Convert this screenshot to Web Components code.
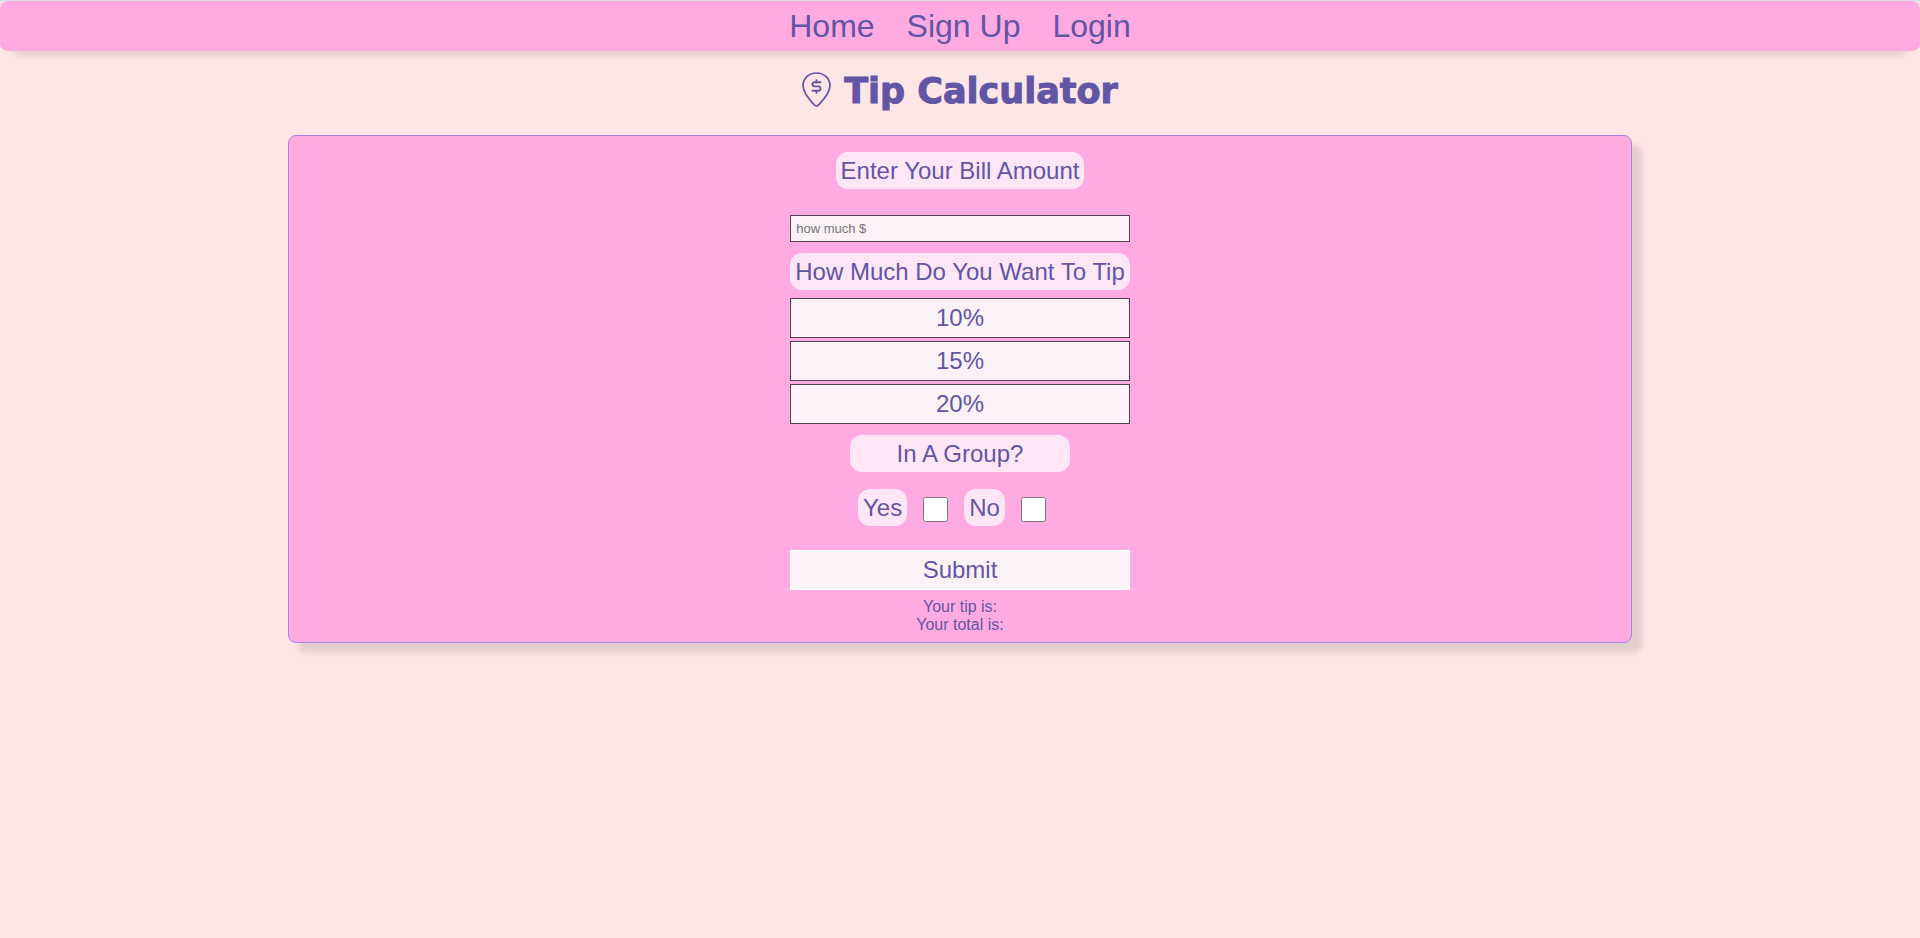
<!DOCTYPE html>
<html lang="en">
<head>
<meta charset="utf-8">
<meta name="viewport" content="width=device-width, initial-scale=1">
<title>Tip Calculator</title>
<style>
  body {
    --ink: #6155a6;
    --line: #a685e2;
    --pink: #ffabe1;
    --page: #ffe6e6;
    --pill: #ffe6f7;
    --field: #fbf2f8;
    --field-line: #54404f;
    margin: 0;
    min-height: 100vh;
    background: var(--page);
    color: var(--ink);
    font-family: "Liberation Sans", Arial, sans-serif;
  }
</style>
</head>
<body>
<site-nav>
  <nav-link href="#home">Home</nav-link>
  <nav-link href="#signup">Sign Up</nav-link>
  <nav-link href="#login">Login</nav-link>
</site-nav>
<page-title>Tip Calculator</page-title>
<tip-calculator></tip-calculator>

<script>
  class BaseElement extends HTMLElement {
    constructor() {
      super();
      this.attachShadow({ mode: "open" }).innerHTML = this.constructor.markup;
    }
  }

  customElements.define("site-nav", class extends BaseElement {
    static markup = `
      <style>
        :host { display: block; border-top: 1px solid #dadce0; }
        nav {
          display: flex; justify-content: center; gap: 32px;
          padding: 7px 0 6px; border-radius: 8px;
          background: var(--pink);
          box-shadow: 0 20px 6px -15px rgba(0, 0, 0, .1);
        }
      </style>
      <nav><slot></slot></nav>`;
  });

  customElements.define("nav-link", class extends BaseElement {
    static markup = `
      <style>
        :host { display: block; }
        a { display: block; color: var(--ink); font-size: 32px; line-height: 37px; text-decoration: none; }
      </style>
      <a><slot></slot></a>`;
    connectedCallback() {
      this.shadowRoot.querySelector("a").href = this.getAttribute("href");
    }
  });

  customElements.define("page-title", class extends BaseElement {
    static markup = `
      <style>
        :host { display: block; }
        h1 {
          display: flex; justify-content: center; align-items: center; gap: 13px;
          margin: 0; padding: 15px 0 19px;
          font: 900 35px/50px "Arial Black", "DejaVu Sans", sans-serif;
        }
        svg { width: 29px; height: 35px; margin-bottom: 4px; }
        span { -webkit-text-stroke: 1px currentColor; }
      </style>
      <h1>
        <svg viewBox="0 0 29 35" fill="none" stroke="currentColor" aria-hidden="true">
          <path stroke-width="1.7" stroke-linejoin="round" d="M14.5 1C6.8 1 1 6.6 1 13.6c0 6.2 7 14.9 11.6 19.6q1.900 1.700 3.800 0C21 28.500 28 19.800 28 13.600 28 6.600 22.200 1 14.500 1Z"/>
          <path stroke-width="1.9" stroke-linejoin="round" stroke-linecap="round" d="M18.500 10.200h-6q-2 0-2 2.100t2 2.100h4q2 0 2 2.200t-2 2.200h-6M14.500 8.200v2M14.500 18.800v2"/>
        </svg>
        <span><slot></slot></span>
      </h1>`;
  });

  customElements.define("pill-label", class extends BaseElement {
    static markup = `
      <style>
        :host {
          display: block; padding: 5px; border-radius: 12px;
          background: var(--pill); font-size: 24px; line-height: 27px;
          text-align: center; white-space: nowrap;
        }
      </style>
      <slot></slot>`;
  });

  customElements.define("action-button", class extends BaseElement {
    static markup = `
      <style>
        :host { display: block; }
        button {
          display: block; width: 100%; margin: 0; padding: 5px;
          border: 1px solid var(--edge, var(--field-line)); border-radius: 0;
          background: var(--field); color: var(--ink);
          font: 24px/28px "Liberation Sans", Arial, sans-serif;
        }
      </style>
      <button type="button"><slot></slot></button>`;
  });

  customElements.define("tip-calculator", class extends BaseElement {
    static markup = `
      <style>
        :host {
          display: block; box-sizing: border-box; width: 70%; margin: 0 auto;
          padding: 16px 0 8px; border: 1px solid var(--line); border-radius: 8px;
          background: var(--pink);
          box-shadow: 10px 10px 5px rgba(0, 0, 0, .1);
        }
        form { display: grid; justify-items: center; width: max-content; margin: 0 auto; }
        input[type="text"] {
          box-sizing: border-box; width: 100%; margin: 26px 0 11px; padding: 5px;
          border: 1px solid var(--field-line); border-radius: 0;
          background: var(--field); color: var(--ink);
          font: 13px/15px "Liberation Sans", Arial, sans-serif;
        }
        input::placeholder { color: #757575; opacity: 1; }
        .choices { display: grid; gap: 3px; width: 100%; margin: 8px 0 11px; }
        .group { width: 210px; }
        .answers { display: flex; align-items: center; gap: 16px; padding: 17px 16px 24px 0; }
        .answers input { width: 25px; height: 25px; margin: 4px 0 0; }
        .submit { --edge: #fff; width: 100%; }
        p { margin: 0; font-size: 16px; line-height: 18px; }
        .result { padding-top: 8px; text-align: center; }
      </style>
      <form>
        <label for="bill"><pill-label>Enter Your Bill Amount</pill-label></label>
        <input id="bill" type="text" placeholder="how much $">
        <pill-label>How Much Do You Want To Tip</pill-label>
        <div class="choices">
          <action-button>10%</action-button>
          <action-button>15%</action-button>
          <action-button>20%</action-button>
        </div>
        <pill-label class="group">In A Group?</pill-label>
        <div class="answers">
          <label for="yes"><pill-label>Yes</pill-label></label>
          <input id="yes" type="checkbox">
          <label for="no"><pill-label>No</pill-label></label>
          <input id="no" type="checkbox">
        </div>
        <action-button class="submit">Submit</action-button>
        <div class="result">
          <p>Your tip is:</p>
          <p>Your total is:</p>
        </div>
      </form>`;
  });
</script>
</body>
</html>
